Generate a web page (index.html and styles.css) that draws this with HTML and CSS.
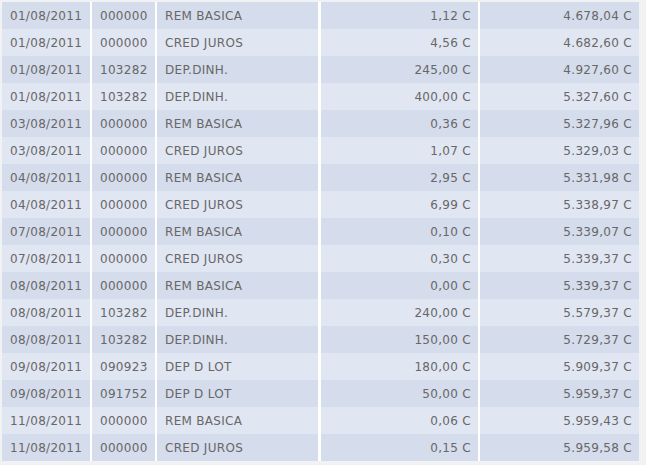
FILE: index.html
```html
<!DOCTYPE html>
<html>
<head>
<meta charset="utf-8">
<link rel="stylesheet" href="styles.css">
</head>
<body>
<table class="extrato">
<colgroup>
<col class="c-data"><col class="c-doc"><col class="c-hist"><col class="c-valor"><col class="c-saldo">
</colgroup>
<tbody>
<tr class="odd"><td>01/08/2011</td><td>000000</td><td>REM BASICA</td><td class="num sep">1,12 C</td><td class="num">4.678,04 C</td></tr>
<tr class="even"><td>01/08/2011</td><td>000000</td><td>CRED JUROS</td><td class="num sep">4,56 C</td><td class="num">4.682,60 C</td></tr>
<tr class="odd"><td>01/08/2011</td><td>103282</td><td>DEP.DINH.</td><td class="num sep">245,00 C</td><td class="num">4.927,60 C</td></tr>
<tr class="even"><td>01/08/2011</td><td>103282</td><td>DEP.DINH.</td><td class="num sep">400,00 C</td><td class="num">5.327,60 C</td></tr>
<tr class="odd"><td>03/08/2011</td><td>000000</td><td>REM BASICA</td><td class="num sep">0,36 C</td><td class="num">5.327,96 C</td></tr>
<tr class="even"><td>03/08/2011</td><td>000000</td><td>CRED JUROS</td><td class="num sep">1,07 C</td><td class="num">5.329,03 C</td></tr>
<tr class="odd"><td>04/08/2011</td><td>000000</td><td>REM BASICA</td><td class="num sep">2,95 C</td><td class="num">5.331,98 C</td></tr>
<tr class="even"><td>04/08/2011</td><td>000000</td><td>CRED JUROS</td><td class="num sep">6,99 C</td><td class="num">5.338,97 C</td></tr>
<tr class="odd"><td>07/08/2011</td><td>000000</td><td>REM BASICA</td><td class="num sep">0,10 C</td><td class="num">5.339,07 C</td></tr>
<tr class="even"><td>07/08/2011</td><td>000000</td><td>CRED JUROS</td><td class="num sep">0,30 C</td><td class="num">5.339,37 C</td></tr>
<tr class="odd"><td>08/08/2011</td><td>000000</td><td>REM BASICA</td><td class="num sep">0,00 C</td><td class="num">5.339,37 C</td></tr>
<tr class="even"><td>08/08/2011</td><td>103282</td><td>DEP.DINH.</td><td class="num sep">240,00 C</td><td class="num">5.579,37 C</td></tr>
<tr class="odd"><td>08/08/2011</td><td>103282</td><td>DEP.DINH.</td><td class="num sep">150,00 C</td><td class="num">5.729,37 C</td></tr>
<tr class="even"><td>09/08/2011</td><td>090923</td><td>DEP D LOT</td><td class="num sep">180,00 C</td><td class="num">5.909,37 C</td></tr>
<tr class="odd"><td>09/08/2011</td><td>091752</td><td>DEP D LOT</td><td class="num sep">50,00 C</td><td class="num">5.959,37 C</td></tr>
<tr class="even"><td>11/08/2011</td><td>000000</td><td>REM BASICA</td><td class="num sep">0,06 C</td><td class="num">5.959,43 C</td></tr>
<tr class="odd"><td>11/08/2011</td><td>000000</td><td>CRED JUROS</td><td class="num sep">0,15 C</td><td class="num">5.959,58 C</td></tr>
</tbody>
</table>
</body>
</html>
```

FILE: styles.css
```css
html, body {
  margin: 0;
  padding: 0;
  background: #f1f2f4;
}
body {
  padding: 2px 0 0 2px;
}
.extrato {
  border-collapse: collapse;
  table-layout: fixed;
  width: 637px;
  font-family: "DejaVu Sans", Verdana, sans-serif;
  font-size: 12px;
  letter-spacing: 0.3px;
  color: #676767;
}
.c-data { width: 89px; }
.c-doc { width: 65px; }
.c-hist { width: 163px; }
.c-valor { width: 160px; }
.c-saldo { width: 160px; }
.extrato td {
  height: 27px;
  padding: 0 7px 0 8px;
  border-left: 2px solid #ffffff;
  white-space: nowrap;
  vertical-align: middle;
  box-sizing: border-box;
}
.extrato td:first-child {
  border-left: 0;
}
.extrato td.num {
  text-align: right;
  padding: 0 7px 0 6px;
}
.extrato td.sep {
  border-left-width: 3px;
}
.odd td { background: #d5dcec; }
.even td { background: #e1e6f3; }
```
